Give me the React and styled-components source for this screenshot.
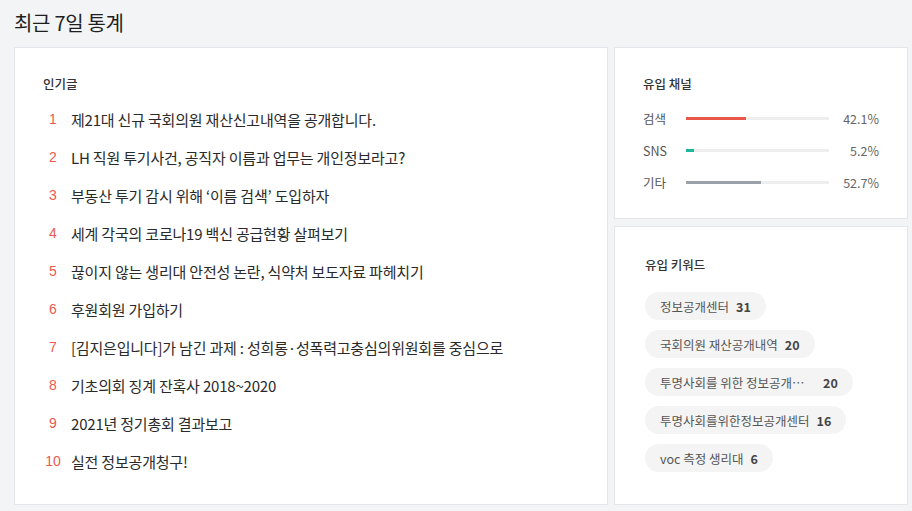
import React from 'react'
import styled, { createGlobalStyle } from 'styled-components';

const popular = [
    "제21대 신규 국회의원 재산신고내역을 공개합니다.",
    "LH 직원 투기사건, 공직자 이름과 업무는 개인정보라고?",
    "부동산 투기 감시 위해 ‘이름 검색’ 도입하자",
    "세계 각국의 코로나19 백신 공급현황 살펴보기",
    "끊이지 않는 생리대 안전성 논란, 식약처 보도자료 파헤치기",
    "후원회원 가입하기",
    "[김지은입니다]가 남긴 과제 : 성희롱·성폭력고충심의위원회를 중심으로",
    "기초의회 징계 잔혹사 2018~2020",
    "2021년 정기총회 결과보고",
    "실전 정보공개청구!",
];

const channels = [
    { name: "검색", value: 42.1, color: "#e9574a" },
    { name: "SNS", value: 5.2, color: "#1db89a" },
    { name: "기타", value: 52.7, color: "#9ba1a8" },
];

const keywords = [
    { word: "정보공개센터", count: 31 },
    { word: "국회의원 재산공개내역", count: 20 },
    { word: "투명사회를 위한 정보공개센터", count: 20, cut: true },
    { word: "투명사회를위한정보공개센터", count: 16 },
    { word: "voc 측정 생리대", count: 6 },
];

export default function App(){
    return(
        <>
            <GlobalStyle />
            <Page>
                <Title>최근 7일 통계</Title>
                <Grid>
                    <Panel>
                        <PanelTitle>인기글</PanelTitle>
                        <List>
                            {popular.map((t, i) => (
                                <Item key={i}>
                                    <Rank>{i + 1}</Rank>
                                    <ItemText>{t}</ItemText>
                                </Item>
                            ))}
                        </List>
                    </Panel>
                    <Side>
                        <Panel>
                            <PanelTitle>유입 채널</PanelTitle>
                            <Channels>
                                {channels.map((c) => (
                                    <Channel key={c.name}>
                                        <ChannelName>{c.name}</ChannelName>
                                        <Track>
                                            <Fill color={c.color} style={{ width: `${Math.max(c.value, 6)}%` }} />
                                        </Track>
                                        <Percent>{c.value}%</Percent>
                                    </Channel>
                                ))}
                            </Channels>
                        </Panel>
                        <Panel grow pad={30} top={29}>
                            <PanelTitle>유입 키워드</PanelTitle>
                            <Chips>
                                {keywords.map((k) => (
                                    <Chip key={k.word}>
                                        <ChipWord cut={k.cut}>{k.word}</ChipWord>
                                        <ChipCount>{k.count}</ChipCount>
                                    </Chip>
                                ))}
                            </Chips>
                        </Panel>
                    </Side>
                </Grid>
            </Page>
        </>
    );
}

const GlobalStyle = createGlobalStyle`
    html, body {
        margin: 0;
        background: #f3f4f6;
        font-family: "Noto Sans CJK KR", "Noto Sans", sans-serif;
        color: #222;
    }
`;
const Page = styled.div`
    width: 912px;
    height: 511px;
    box-sizing: border-box;
    padding: 10px 4px 6px 14px;
    display: flex;
    flex-direction: column;
    overflow: hidden;
`;
const Title = styled.h1`
    margin: 0 0 11px;
    font-size: 20px;
    line-height: 26px;
    font-weight: 400;
    color: #1f1f1f;
    letter-spacing: -0.3px;
`;
const Grid = styled.div`
    flex: 1;
    display: grid;
    grid-template-columns: 594px 294px;
    gap: 6px;
`;
const Side = styled.div`
    display: flex;
    flex-direction: column;
    gap: 7px;
`;
const Panel = styled.div`
    background: #fff;
    border: 1px solid #e4e6eb;
    padding: ${p => p.top || 27}px ${p => p.pad || 28}px 20px;
    flex: ${p => p.grow ? 1 : 'none'};
    display: flex;
    flex-direction: column;
`;
const PanelTitle = styled.h2`
    margin: 0;
    font-size: 12.5px;
    line-height: 18px;
    font-weight: 500;
    color: #333;
`;
const List = styled.ol`
    list-style: none;
    margin: 7px 0 0;
    padding: 0;
`;
const Item = styled.li`
    display: flex;
    align-items: center;
    height: 38px;
`;
const Rank = styled.span`
    width: 20px;
    margin-right: 8px;
    text-align: center;
    font-size: 14px;
    color: #eb5a4e;
    font-family: "Liberation Sans", sans-serif;
`;
const ItemText = styled.span`
    font-size: 15px;
    color: #2a2a2a;
    letter-spacing: -0.2px;
`;
const Channels = styled.div`
    margin-top: 9px;
`;
const Channel = styled.div`
    display: flex;
    align-items: center;
    height: 32px;
`;
const ChannelName = styled.span`
    width: 43px;
    font-size: 12.5px;
    color: #555;
`;
const Track = styled.div`
    width: 144px;
    height: 3px;
    background: #eeeeee;
`;
const Fill = styled.div`
    height: 100%;
    background: ${p => p.color};
`;
const Percent = styled.span`
    width: 50px;
    text-align: right;
    font-size: 12.5px;
    color: #666;
`;
const Chips = styled.div`
    display: flex;
    flex-direction: column;
    align-items: flex-start;
    gap: 10px;
    margin-top: 18px;
`;
const Chip = styled.div`
    display: flex;
    align-items: center;
    gap: 7px;
    height: 28px;
    padding: 0 15px;
    border-radius: 14px;
    background: #f4f4f4;
    font-size: 12.5px;
    color: #555;
`;
const ChipWord = styled.span`
    max-width: ${p => p.cut ? '148px' : 'none'};
    white-space: nowrap;
    overflow: hidden;
    text-overflow: ellipsis;
    margin-right: ${p => p.cut ? '8px' : '0'};
`;
const ChipCount = styled.span`
    font-weight: 600;
    color: #444;
`;
